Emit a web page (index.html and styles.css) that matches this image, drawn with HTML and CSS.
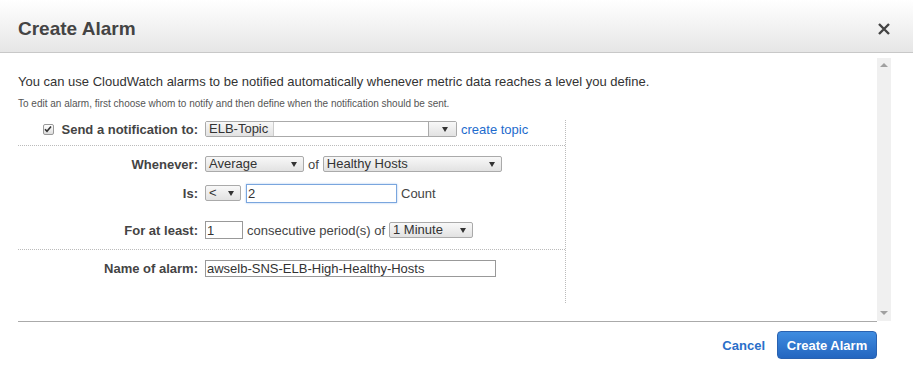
FILE: index.html
```html
<!DOCTYPE html>
<html lang="en">
<head>
    <meta charset="UTF-8">
    <title>Create Alarm</title>
    <link rel="stylesheet" href="styles.css">
</head>
<body>
    <div class="dialog">
        <div class="dialog-header">
            <h1>Create Alarm</h1>
            <svg class="close" width="14" height="14" viewBox="0 0 14 14">
                <path d="M2 2 L12 12 M12 2 L2 12" stroke="#444" stroke-width="2.4" fill="none"/>
            </svg>
        </div>

        <div class="panel">
            <div class="content">
                <p class="intro">You can use CloudWatch alarms to be notified automatically whenever metric data reaches a level you define.</p>
                <p class="hint">To edit an alarm, first choose whom to notify and then define when the notification should be sent.</p>

                <div class="form">
                    <!-- notification -->
                    <div class="section sec-notify">
                        <div class="row">
                            <label class="label">
                                <span class="checkbox">
                                    <svg width="8" height="8" viewBox="0 0 8 8"><path d="M1 4.2 L3 6.3 L7 1.5" stroke="#333" stroke-width="1.6" fill="none"/></svg>
                                </span>
                                Send a notification to:
                            </label>
                            <div class="field">
                                <span class="select topic">
                                    <span class="topic-name">ELB-Topic</span>
                                    <span class="topic-btn"><span class="arrow"></span></span>
                                </span>
                                <a href="#" class="link">create topic</a>
                            </div>
                        </div>
                    </div>

                    <!-- threshold -->
                    <div class="section sec-threshold">
                        <div class="row">
                            <label class="label">Whenever:</label>
                            <div class="field">
                                <span class="select w-stat">Average<span class="arrow"></span></span>
                                <span class="text">of</span>
                                <span class="select w-metric">Healthy Hosts<span class="arrow"></span></span>
                            </div>
                        </div>
                        <div class="row row-is">
                            <label class="label">Is:</label>
                            <div class="field">
                                <span class="select w-op">&lt;<span class="arrow"></span></span>
                                <input class="input focused w-value" type="text" value="2">
                                <span class="text">Count</span>
                            </div>
                        </div>
                        <div class="row row-period">
                            <label class="label">For at least:</label>
                            <div class="field">
                                <input class="input w-count" type="text" value="1">
                                <span class="text">consecutive period(s) of</span>
                                <span class="select w-period">1 Minute<span class="arrow"></span></span>
                            </div>
                        </div>
                    </div>

                    <!-- name -->
                    <div class="section sec-name">
                        <div class="row">
                            <label class="label">Name of alarm:</label>
                            <div class="field">
                                <input class="input w-name" type="text" value="awselb-SNS-ELB-High-Healthy-Hosts">
                            </div>
                        </div>
                    </div>
                </div>
            </div>
            <div class="scrollbar">
                <span class="sb-up"></span>
                <span class="sb-down"></span>
            </div>
        </div>

        <div class="dialog-footer">
            <a href="#" class="cancel">Cancel</a>
            <button class="primary">Create Alarm</button>
        </div>
    </div>
</body>
</html>
```

FILE: styles.css
```css
body {
    margin: 0;
    font-family: "Liberation Sans", Arial, sans-serif;
    font-size: 13px;
    color: #333;
    background: #fff;
}
.dialog {
    width: 913px;
    height: 371px;
    overflow: hidden;
}
.dialog-header {
    height: 52px;
    border-bottom: 1px solid #c8c8c8;
    background: linear-gradient(#ffffff, #e6e6e6);
    display: flex;
    align-items: center;
    justify-content: space-between;
    padding: 0 22px 0 18px;
}
.dialog-header h1 {
    margin: 0;
    font-size: 19px;
    font-weight: bold;
    color: #444;
    padding-top: 6px;
}
.close {
    margin-top: 6px;
}
.panel {
    display: flex;
    margin: 5px 22px 0 18px;
    height: 264px;
}
.content {
    flex: 1;
    border-bottom: 1px solid #aaa;
}
.scrollbar {
    width: 14px;
    background: #f0f0f0;
    display: flex;
    flex-direction: column;
    justify-content: space-between;
    align-items: center;
    padding: 5px 0 6px;
    box-sizing: border-box;
    height: 263px;
}
.sb-up, .sb-down {
    width: 0;
    height: 0;
    border-left: 4px solid transparent;
    border-right: 4px solid transparent;
}
.sb-up {
    border-bottom: 4px solid #a0a0a0;
}
.sb-down {
    border-top: 4px solid #a0a0a0;
}
.intro {
    margin: 16px 0 0;
    line-height: 16px;
    font-size: 13px;
}
.hint {
    margin: 8px 0 0;
    line-height: 12px;
    font-size: 10px;
    color: #555;
}
.form {
    width: 547px;
    border-right: 1px dotted #bbb;
    margin-top: 10px;
}
.section {
    border-bottom: 1px dotted #bbb;
}
.section:last-child {
    border-bottom: none;
}
.sec-notify {
    padding-bottom: 7px;
}
.sec-threshold {
    padding: 9px 0 10px;
}
.sec-name {
    padding: 9px 0 26px;
}
.row {
    display: flex;
    align-items: center;
    height: 18px;
}
.row-is {
    margin-top: 11px;
}
.row-period {
    margin-top: 19px;
}
.label {
    width: 180px;
    margin-right: 7px;
    text-align: right;
    font-weight: bold;
    color: #444;
    display: flex;
    align-items: center;
    justify-content: flex-end;
}
.checkbox {
    width: 9px;
    height: 9px;
    border: 1px solid #999;
    border-radius: 2px;
    background: linear-gradient(#fff, #ddd);
    display: inline-flex;
    align-items: center;
    justify-content: center;
    margin-right: 8px;
}
.field {
    display: flex;
    align-items: center;
}
.text {
    margin: 0 4px;
    color: #444;
}
.select {
    position: relative;
    display: inline-block;
    box-sizing: border-box;
    height: 16px;
    line-height: 14px;
    border: 1px solid #aaa;
    border-radius: 2px;
    background: linear-gradient(#f8f8f8, #e2e2e2);
    padding-left: 3px;
    color: #333;
}
.arrow {
    position: absolute;
    right: 6px;
    top: 5px;
    width: 0;
    height: 0;
    border-left: 3px solid transparent;
    border-right: 3px solid transparent;
    border-top: 5px solid #333;
}
.topic {
    width: 252px;
    background: #fff;
    padding: 0;
    display: flex;
}
.topic-name {
    width: 68px;
    padding-left: 3px;
    box-sizing: border-box;
    background: linear-gradient(#f8f8f8, #e2e2e2);
    border-right: 1px solid #ccc;
}
.topic-btn {
    position: relative;
    margin-left: auto;
    width: 27px;
    border-left: 1px solid #aaa;
    background: linear-gradient(#f8f8f8, #e2e2e2);
}
.topic-btn .arrow {
    right: 8px;
}
.link {
    margin-left: 4px;
    color: #1e6bcd;
    text-decoration: none;
}
.w-stat { width: 99px; }
.w-metric { width: 179px; }
.w-op { width: 36px; }
.w-period { width: 84px; }
.input {
    box-sizing: border-box;
    font-family: "Liberation Sans", Arial, sans-serif;
    font-size: 13px;
    color: #333;
    border: 1px solid #999;
    padding: 0 1px;
    margin: 0;
    outline: none;
}
.w-value {
    width: 151px;
    height: 19px;
    margin-left: 5px;
}
.focused {
    border: 1px solid #7aa6de;
    box-shadow: 0 0 2px #a9c7ee;
}
.w-count {
    width: 38px;
    height: 18px;
}
.w-name {
    width: 291px;
    height: 17px;
}
.dialog-footer {
    display: flex;
    justify-content: flex-end;
    align-items: center;
    margin: 9px 36px 0 0;
}
.cancel {
    color: #2a6fc9;
    font-weight: bold;
    text-decoration: none;
    margin-right: 12px;
}
.primary {
    width: 100px;
    height: 28px;
    border: 1px solid #2a62b0;
    border-radius: 4px;
    background: linear-gradient(#3f8ce0, #2466c0);
    color: #fff;
    font-family: "Liberation Sans", Arial, sans-serif;
    font-size: 13px;
    font-weight: bold;
    padding: 0;
}
```
